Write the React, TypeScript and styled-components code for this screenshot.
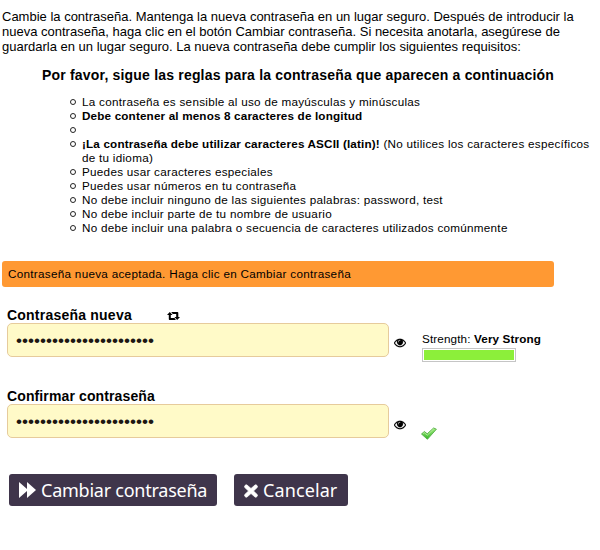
import React from "react";
import styled, { createGlobalStyle } from "styled-components";

const GlobalStyle = createGlobalStyle`
  *, *::before { box-sizing: border-box; }
  body { margin: 0; background: #fff; color: #000; font: 13px/15px "Liberation Sans", Arial, sans-serif; }
`;
const Page = styled.main`
  width: 600px; height: 550px; padding: 9px 0 0 2px; overflow: hidden;
`;
const Intro = styled.p`
  margin: 0; white-space: nowrap;
`;
const Heading = styled.h2`
  margin: 12px 0 0 40px; font-size: 14px; line-height: 18px; letter-spacing: .19px; white-space: nowrap;
`;
const Rules = styled.ul`
  list-style: none; margin: 11px 0 0 68px; padding: 0;
  font-size: 11.7px; line-height: 14px; letter-spacing: .27px; white-space: nowrap;
  b { letter-spacing: .16px; }
`;
const Rule = styled.li`
  display: flex; min-height: 14px; gap: 6px;
  &::before { content: ""; flex: none; width: 6px; height: 6px; margin-top: 4px; border: 1px solid #222; border-radius: 50%; }
`;
const Notice = styled.div`
  width: 552px; height: 26px; margin-top: 26px; padding: 0 6px;
  border-radius: 3px; background: #ff9933; font-size: 11.7px; line-height: 26px; letter-spacing: .29px;
`;
const Field = styled.section<{ $top: number }>`
  margin: ${p => p.$top}px 0 0 5px;
`;
const Label = styled.label<{ $spacing: number }>`
  display: flex; align-items: center; height: 17px; padding-top: 2px;
  font-size: 14px; font-weight: bold; letter-spacing: ${p => p.$spacing}px;
`;
const FieldRow = styled.div`
  display: flex; height: 34px;
`;
const Input = styled.input`
  width: 382px; height: 34px; padding: 0 8px; border: 1px solid #e6cb9c;
  border-radius: 5px; outline: none; background: #fffac8; color: #1c1713;
  font: 17.15px "Liberation Sans", Arial, sans-serif;
`;
const Icon = styled.svg<{ $x?: number; $y?: number }>`
  display: block; flex: none; fill: currentColor;
  margin: ${p => p.$y ?? 0}px 0 0 ${p => p.$x ?? 0}px;
`;
const Strength = styled.div`
  margin: 9px 0 0 16px; font-size: 11.7px; line-height: 14px; letter-spacing: .13px;
`;
const Meter = styled.div`
  width: 94px; height: 14px; margin-top: 2px; padding: 1px; border: 1px solid #c5c5c5;
  &::before { content: ""; display: block; height: 10px; background: #8cef3a; }
`;
const Actions = styled.div`
  display: flex; gap: 17px; margin: 36px 0 0 7px;
`;
const Button = styled.button<{ $width: number }>`
  display: flex; align-items: center; width: ${p => p.$width}px; height: 32px; padding: 0 0 0 10px;
  border: 0; border-radius: 3px; background: #3f354b; color: #fff;
  font: 18px/32px "Noto Sans", sans-serif; white-space: nowrap;
`;
const ButtonText = styled.span<{ $spacing: number }>`
  margin-left: 5px; letter-spacing: ${p => p.$spacing}px;
`;
const Eye = ({ y }: { y: number }) => (
  <Icon width="12" height="13" viewBox="0 0 1792 1792" preserveAspectRatio="none" $x={5} $y={y}>
    <path stroke="currentColor" strokeWidth="30" d="M1664 960q-152-236-381-353 61 104 61 225 0 185-131.5 316.5t-316.5 131.5-316.5-131.5-131.5-316.5q0-121 61-225-229 117-381 353 133 205 333.5 326.5t434.5 121.5 434.5-121.5 333.5-326.5zm-720-384q0-20-14-34t-34-14q-125 0-214.5 89.5t-89.5 214.5q0 20 14 34t34 14 34-14 14-34q0-86 61-147t147-61q20 0 34-14t14-34zm848 384q0 34-20 69-140 230-376.5 368.5t-499.5 138.5-499.5-139-376.5-368q-20-35-20-69t20-69q140-229 376.5-368t499.5-139 499.5 139 376.5 368q20 35 20 69z" />
  </Icon>
);
const password = "x".repeat(23);

export default function App() {
  return (
    <>
      <GlobalStyle />
      <Page>
        <Intro>
          Cambie la contraseña. Mantenga la nueva contraseña en un lugar seguro. Después de introducir la<br />
          nueva contraseña, haga clic en el botón Cambiar contraseña. Si necesita anotarla, asegúrese de<br />
          guardarla en un lugar seguro. La nueva contraseña debe cumplir los siguientes requisitos:
        </Intro>
        <Heading>Por favor, sigue las reglas para la contraseña que aparecen a continuación</Heading>
        <Rules>
          <Rule>La contraseña es sensible al uso de mayúsculas y minúsculas</Rule>
          <Rule><b>Debe contener al menos 8 caracteres de longitud</b></Rule>
          <Rule />
          <Rule><span><b>¡La contraseña debe utilizar caracteres ASCII (latin)!</b> (No utilices los caracteres específicos<br />de tu idioma)</span></Rule>
          <Rule>Puedes usar caracteres especiales</Rule>
          <Rule>Puedes usar números en tu contraseña</Rule>
          <Rule>No debe incluir ninguno de las siguientes palabras: password, test</Rule>
          <Rule>No debe incluir parte de tu nombre de usuario</Rule>
          <Rule>No debe incluir una palabra o secuencia de caracteres utilizados comúnmente</Rule>
        </Rules>
        <Notice>Contraseña nueva aceptada. Haga clic en Cambiar contraseña</Notice>
        <Field $top={19}>
          <Label $spacing={0.22}>
            Contraseña nueva
            <Icon width="13" height="8" viewBox="0 0 13 8" $x={35} $y={1}>
              <path d="M2.8 0 5.6 3H3.8v3h3.7l1.4 2H2.5Q1.8 8 1.8 7V3H0ZM4.2 0h6.3q.8 0 .8.9V5H13l-2.8 3-2.8-3h1.8V2H5.8Z" />
            </Icon>
          </Label>
          <FieldRow>
            <Input type="password" defaultValue={password} aria-label="Contraseña nueva" />
            <Eye y={13} />
            <Strength>Strength: <b>Very Strong</b><Meter /></Strength>
          </FieldRow>
        </Field>
        <Field $top={30}>
          <Label $spacing={0.12}>Confirmar contraseña</Label>
          <FieldRow>
            <Input type="password" defaultValue={password} aria-label="Confirmar contraseña" />
            <Eye y={14} />
            <Icon width="16" height="13" viewBox="0 0 16 13" $x={15} $y={23}>
              <defs>
                <linearGradient id="tick" x1="0" y1="0" x2="0" y2="1">
                  <stop offset="0" stopColor="#a5ee83" />
                  <stop offset="1" stopColor="#32b526" />
                </linearGradient>
              </defs>
              <path d="M.5 7 3.4 4.5l2.8 2.3L12.6 1l2.8 1.2L6.4 12.3Z" fill="url(#tick)" stroke="#55ad46" strokeWidth=".9" />
              <path d="m2 6.6 1.3-.9 3 2.5L12.6 2" fill="none" stroke="#c7f5ad" strokeWidth=".7" />
            </Icon>
          </FieldRow>
        </Field>
        <Actions>
          <Button $width={208}>
            <Icon width="17" height="16" viewBox="0 0 17 16"><path d="M0 0 8 7V0l9 8-9 8V9l-8 7Z" /></Icon>
            <ButtonText $spacing={-0.24}>Cambiar contraseña</ButtonText>
          </Button>
          <Button $width={114}>
            <Icon width="14" height="14" viewBox="0 0 14 14" $y={1}><path stroke="currentColor" strokeWidth=".7" d="m3 1 4 3.5L11 1q1-.7 2 .5t.2 2L9.5 7l3.7 3.5q.8.8-.2 2t-2 .5L7 9.5 3 13q-1 .7-2-.5t-.2-2L4.5 7 .8 3.5q-.8-.8.2-2T3 1Z" /></Icon>
            <ButtonText $spacing={0.1}>Cancelar</ButtonText>
          </Button>
        </Actions>
      </Page>
    </>
  );
}
